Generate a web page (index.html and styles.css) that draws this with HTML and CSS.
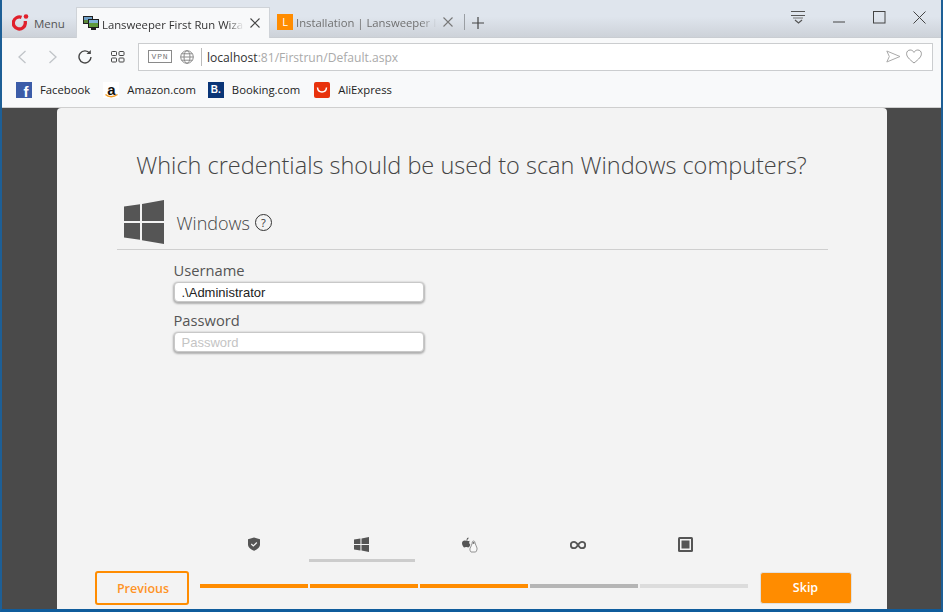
FILE: index.html
```html
<!DOCTYPE html>
<html lang="en">
<head>
<meta charset="utf-8">
<title>Lansweeper First Run Wizard</title>
<link rel="stylesheet" href="styles.css">
</head>
<body>
<div class="window">
  <header class="tabbar">
    <div class="menu">
      <svg class="opera" width="17" height="18" viewBox="0 0 17 18"><path d="M9.500 3.400A6 6 0 1 0 13.300 9.500V7" fill="none" stroke="#e0202c" stroke-width="3.300"/><circle cx="14" cy="2.500" r="2.300" fill="#e0202c"/></svg>
      <span>Menu</span>
    </div>
    <div class="tab active">
      <svg class="favicon" width="16" height="15" viewBox="0 0 16 15"><rect x="0" y="0" width="10" height="8" fill="#222"/><rect x="1" y="1" width="8" height="3" fill="#6fa0c8"/><rect x="1" y="4" width="8" height="3" fill="#5c8a3a"/><rect x="5" y="3" width="11" height="9" fill="#1c1c1c"/><rect x="6" y="4" width="9" height="3" fill="#7fb2d8"/><rect x="6" y="7" width="9" height="4" fill="#5f9a3c"/><rect x="8" y="12" width="5" height="2" fill="#222"/></svg>
      <span class="tab-title">Lansweeper First Run Wiza</span>
      <svg class="tab-x" width="10" height="10" viewBox="0 0 10 10"><path d="M.5.500l9 9M9.500.500l-9 9" stroke="#444" stroke-width="1.100" fill="none"/></svg>
    </div>
    <div class="tab">
      <span class="lfav">L</span>
      <span class="tab-title dim">Installation | Lansweeper I</span>
      <svg class="tab-x" width="10" height="10" viewBox="0 0 10 10"><path d="M.5.500l9 9M9.500.500l-9 9" stroke="#777" stroke-width="1.100" fill="none"/></svg>
    </div>
    <div class="tab-sep"></div>
    <svg class="plus" width="12" height="12" viewBox="0 0 12 12"><path d="M6 0v12M0 6h12" stroke="#444" stroke-width="1.200" fill="none"/></svg>
    <div class="win-ctrls">
      <svg class="wc-easy" width="15" height="13" viewBox="0 0 15 13"><path d="M0 .5h14M0 4.500h14" stroke="#555" fill="none"/><path d="M4 9l3.500 3L11 9" stroke="#555" stroke-width="1.200" fill="none"/><path d="M2 7h10" stroke="#777" fill="none"/></svg>
      <svg class="wc-min" width="12" height="2" viewBox="0 0 12 2"><path d="M0 1h12" stroke="#444" fill="none"/></svg>
      <svg class="wc-max" width="13" height="13" viewBox="0 0 13 13"><rect x=".5" y=".5" width="11.500" height="11.500" stroke="#444" fill="none"/></svg>
      <svg class="wc-close" width="13" height="13" viewBox="0 0 13 13"><path d="M.5.500l12 12M12.500.500l-12 12" stroke="#444" fill="none"/></svg>
    </div>
  </header>

  <nav class="toolbar">
    <svg class="nav-ic" width="10" height="14" viewBox="0 0 10 14"><path d="M8.500 1L2 7l6.500 6" stroke="#c0c4c8" stroke-width="1.300" fill="none"/></svg>
    <svg class="nav-ic" width="10" height="14" viewBox="0 0 10 14"><path d="M1.500 1L8 7l-6.500 6" stroke="#c0c4c8" stroke-width="1.300" fill="none"/></svg>
    <svg class="nav-ic" width="14" height="14" viewBox="0 0 14 14"><path d="M11.800 3.300A6 6 0 1 0 13 7" stroke="#444" stroke-width="1.400" fill="none"/><path d="M8.500 3.900h4.300V0z" fill="#444"/></svg>
    <svg class="nav-ic" width="14" height="12" viewBox="0 0 14 12"><g stroke="#444" fill="none"><rect x=".5" y=".5" width="5" height="4" rx=".8"/><rect x="8" y=".5" width="5" height="4" rx=".8"/><rect x=".5" y="7" width="5" height="4" rx=".8"/><rect x="8" y="7" width="5" height="4" rx=".8"/></g></svg>
    <div class="address">
      <span class="vpn">VPN</span>
      <svg class="globe" width="14" height="14" viewBox="0 0 14 14"><g stroke="#8a8a8a" fill="none"><circle cx="7" cy="7" r="6.300"/><ellipse cx="7" cy="7" rx="3" ry="6.300"/><path d="M.7 7h12.600M1.500 3.800h11M1.500 10.200h11"/></g></svg>
      <span class="addr-sep"></span>
      <span class="url"><b>localhost</b>:81/Firstrun/Default.aspx</span>
      <svg class="send" width="15" height="13" viewBox="0 0 15 13"><path d="M.8 1L14 6.500.8 12l2.500-5.500z" stroke="#aaa" fill="none"/></svg>
      <svg class="heart" width="16" height="15" viewBox="0 0 16 15"><path d="M8 14C3 10 .6 7.600.6 4.700.6 2.500 2.200 1 4.200 1 5.800 1 7.200 1.900 8 3.400 8.800 1.900 10.200 1 11.800 1c2 0 3.600 1.500 3.600 3.700C15.400 7.600 13 10 8 14z" stroke="#999" fill="none"/></svg>
    </div>
  </nav>

  <nav class="bookmarks">
    <a class="bm"><span class="bm-ic fb">f</span>Facebook</a>
    <a class="bm bm-amz"><span class="bm-ic amz"><span class="amz-a">a</span><svg class="amz-smile" width="13" height="4" viewBox="0 0 13 4"><path d="M.5.500c3 3 8 3 12 0" stroke="#f29a1f" stroke-width="1.300" fill="none"/></svg></span>Amazon.com</a>
    <a class="bm bm-bk"><span class="bm-ic bk">B.</span>Booking.com</a>
    <a class="bm"><span class="bm-ic ali"><svg width="12" height="6" viewBox="0 0 12 6"><path d="M1.500 .5c.5 6 8.500 6 9 0" stroke="#fff" stroke-width="1.500" fill="none"/></svg></span>AliExpress</a>
  </nav>

  <main class="page">
    <section class="card">
      <h1 class="title">Which credentials should be used to scan Windows computers?</h1>
      <div class="os-head">
        <svg class="win-big" width="40" height="44" viewBox="0 0 40 44"><path d="M0 6.500l16-2.200V21H0zM18 4l22-4v21H18zM0 23h16v16.700L0 37.500zM18 23h22v21l-22-3.800z" fill="#555"/></svg>
        <span class="os-name">Windows</span>
        <span class="help">?</span>
      </div>
      <form class="form">
        <label class="lbl">Username</label>
        <input class="inp" type="text" value=".\Administrator">
        <label class="lbl">Password</label>
        <input class="inp" type="text" placeholder="Password">
      </form>
      <div class="spacer"></div>
      <div class="steps">
        <div class="step">
          <svg width="14" height="14" viewBox="0 0 14 14"><path d="M7 .5l6 1.800v5C13 10.500 10 12.800 7 13.800 4 12.800 1 10.500 1 7.300v-5z" fill="#555"/><path d="M4.300 7l2 2 3.500-3.500" stroke="#f3f3f3" stroke-width="1.200" fill="none"/></svg>
        </div>
        <div class="step current">
          <svg width="15" height="15" viewBox="0 0 14 14"><path d="M0 2.300l6-.9V6.500H0zM7 1.300L14 0v6.500H7zM0 7.500h6v5.100l-6-.9zM7 7.500h7V14l-7-1.300z" fill="#555"/></svg>
        </div>
        <div class="step">
          <svg width="16" height="16" viewBox="0 0 16 16"><path d="M4.500 3.500c1 0 1.300.5 2 .5.400 0 .8-.2 1.300-.3-.9 1-.9 3 .5 4-.5 1.500-1.300 2.800-2.300 2.800-.8 0-1-.4-1.800-.4s-1 .4-1.700.4C1.500 10.500 0 8 0 6.200 0 4.500 1.300 3.500 2.500 3.500c.8 0 1.400.3 2 0zM4.500 3c0-1.200.9-2.300 2-2.500C6.700 1.800 5.700 3 4.500 3z" fill="#555"/><path d="M11.500 4c1.200 0 1.500 1 1.500 2 .2 1.300 1.500 3 2 5 .2 1.200-.3 3-1.300 4H9c-1-.8-1.300-2.700-.9-3.800.7-1.700 1.900-3.300 2.100-5 0-1.200.3-2.200 1.300-2.200z" fill="#f8f8f8" stroke="#777" stroke-width=".8"/><path d="M10.800 5.200h1.500v1.500h-1.500z" fill="#555"/></svg>
        </div>
        <div class="step step-inf">
          <svg width="16" height="10" viewBox="0 0 16 10"><path d="M8 5C6.800 2.900 5.600 1.800 4 1.800a3.200 3.200 0 0 0 0 6.400C5.600 8.200 6.800 7.100 8 5c1.200-2.100 2.400-3.200 4-3.200a3.200 3.200 0 0 1 0 6.400C10.400 8.200 9.200 7.100 8 5z" stroke="#555" stroke-width="1.800" fill="none"/></svg>
        </div>
        <div class="step">
          <svg width="15" height="15" viewBox="0 0 15 15"><rect x="0" y="0" width="15" height="15" rx="1.500" fill="#555"/><rect x="2" y="2" width="11" height="11" fill="#f3f3f3"/><rect x="3.500" y="3.500" width="8" height="8" fill="#555"/></svg>
        </div>
      </div>
      <div class="footer">
        <button class="btn prev" type="button">Previous</button>
        <div class="progress">
          <span class="seg done"></span><span class="seg done"></span><span class="seg done"></span><span class="seg mid"></span><span class="seg light"></span>
        </div>
        <button class="btn skip" type="button">Skip</button>
      </div>
    </section>
  </main>
</div>
</body>
</html>
```
FILE: styles.css
```css
* { box-sizing: border-box; }
html, body { margin: 0; padding: 0; }
body { width: 943px; height: 612px; overflow: hidden; font-family: "Open Sans", "Noto Sans", sans-serif; }
.window { width: 943px; height: 612px; display: flex; flex-direction: column; border-left: 2px solid #1d5f96; border-right: 2px solid #1d5f96; border-bottom: 3px solid #0f5c9c; }

.tabbar { height: 38px; flex: none; display: flex; align-items: flex-end; background: linear-gradient(#dfe5ed 0, #dfe5ed 45%, #cdd2d9 100%); border-bottom: 1px solid #c9cdd2; }
.menu { width: 74px; height: 30px; display: flex; align-items: center; padding-left: 10px; gap: 5px; font-size: 11.5px; color: #555; }
.menu span { margin-top: 2px; }
.opera { margin-top: 1px; }
.tab { height: 31px; display: flex; align-items: center; font-size: 11.3px; white-space: nowrap; }
.tab.active { width: 194px; background: #f8f9fa; border: 1px solid #cfd3d8; border-bottom: 0; padding: 0 3px 0 6px; margin-bottom: -1px; color: #333; }
.tab:not(.active) { width: 194px; padding: 0 11px 0 7px; color: #666; }
.tab-title { flex: 1; padding-top: 2px; -webkit-mask-image: linear-gradient(to right, #000 88%, transparent); mask-image: linear-gradient(to right, #000 88%, transparent); }
.favicon { flex: none; margin-right: 3px; }
.tab-title.dim { color: #707070; }
.tab-x { flex: none; margin-left: 6px; }
.active .tab-x { margin-right: 6px; }
.lfav { flex: none; width: 16px; height: 16px; background: #ff8c00; color: #fff; font-size: 11px; text-align: center; line-height: 16px; margin-right: 3px; }
.tab-sep { width: 1px; height: 16px; background: #9a9ea3; margin: 0 0 7px 0; }
.plus { margin: 0 0 8px 7px; }
.win-ctrls { margin-left: auto; align-self: stretch; width: 160px; display: flex; align-items: flex-start; }
.win-ctrls svg { flex: none; }
.wc-easy { margin: 11px 0 0 10px; }
.wc-min { margin: 21px 0 0 27px; }
.wc-max { margin: 11px 0 0 28px; }
.wc-close { margin: 11px 0 0 27px; }

.toolbar { height: 37px; flex: none; display: flex; align-items: center; background: #f8f9fa; padding-left: 15px; }
.nav-ic:nth-child(2) { margin-left: 21px; }
.nav-ic:nth-child(3) { margin-left: 20px; }
.nav-ic:nth-child(4) { margin-left: 19px; }
.address { width: 795px; height: 28px; margin-left: 13px; background: #fff; border: 1px solid #cbcdcf; display: flex; align-items: center; padding: 0 10px 0 9px; font-size: 12.1px; }
.vpn { width: 24px; height: 13px; border: 1px solid #8a8a8a; font-size: 8px; line-height: 11px; letter-spacing: .8px; text-align: center; color: #777; flex: none; font-family: "Liberation Mono", monospace; }
.globe { margin-left: 8px; flex: none; }
.addr-sep { width: 1px; height: 18px; background: #bbb; margin: 0 5px 0 7px; flex: none; }
.url { flex: 1; color: #aaa; padding-top: 2px; }
.url b { font-weight: 400; color: #333; }
.send { flex: none; margin-right: 5px; }
.heart { flex: none; }

.bookmarks { height: 33px; flex: none; display: flex; align-items: center; background: #f8f9fa; border-bottom: 1px solid #cfcfcf; padding: 0 0 3px 14px; font-size: 11.3px; color: #222; }
.bm { display: flex; align-items: center; margin-right: 13px; }
.bm-amz { margin-right: 12px; }
.bm-bk { margin-right: 14px; }
.bm-ic { width: 16px; height: 16px; flex: none; margin-right: 8px; display: flex; align-items: center; justify-content: center; font-family: "Liberation Sans", sans-serif; font-weight: 700; color: #fff; }
.fb { background: #3b5ca8; font-size: 15px; line-height: 13px; padding-top: 3px; padding-left: 4px; }
.amz { flex-direction: column; color: #111; background: #fff; }
.amz-a { font-size: 15px; line-height: 15px; }
.amz-smile { margin-top: -3px; flex: none; }
.bk { background: #0a3577; font-size: 10px; }
.ali { background: #e8320c; border-radius: 2px; }

.page { flex: 1; min-height: 0; background: #4a4a4a; display: flex; justify-content: center; }
.card { width: 830px; background: #f3f3f3; border-radius: 4px 4px 0 0; display: flex; flex-direction: column; }
.title { margin: 42px 0 0; font-size: 23.5px; line-height: 30px; font-weight: 300; color: #444; text-align: center; }
.os-head { margin: 20px 59px 0 60px; height: 50px; border-bottom: 1px solid #cfcfcf; display: flex; align-items: flex-start; }
.win-big { margin: 0 0 0 7px; flex: none; }
.os-name { margin: 11px 0 0 13px; font-size: 18px; line-height: 24px; font-weight: 300; color: #444; }
.help { margin: 14px 0 0 5px; width: 17px; height: 17px; border: 1px solid #333; border-radius: 50%; font-size: 11px; line-height: 15px; text-align: center; color: #333; }
.form { margin: 11px 0 0 117px; width: 251px; display: flex; flex-direction: column; }
.lbl { font-size: 14.7px; line-height: 19px; color: #555; }
.inp { width: 250px; height: 20px; border: 1px solid #c8c8c8; border-radius: 4px; background: #fff; box-shadow: 0 1px 2px 1px rgba(0,0,0,.28); padding: 0 7px; font: 13px "Liberation Sans", Arial, sans-serif; color: #222; margin: 2px 0 9px; }
.inp::placeholder { color: #c4c4c4; opacity: 1; }
.spacer { flex: 1; }
.steps { display: flex; margin-left: 143px; height: 34px; align-items: flex-start; }
.step { width: 108px; height: 22px; display: flex; justify-content: center; align-items: flex-start; }
.step.current { box-shadow: 0 3px 0 #cccccc; width: 106px; margin: 0 1px; }
.step-inf { padding-top: 3px; }
.footer { display: flex; align-items: center; padding: 0 35px 0 38px; height: 34px; margin-bottom: 4px; }
.btn { font: 600 12.5px "Open Sans", sans-serif; border-radius: 3px; height: 34px; }
.prev { width: 94px; background: #f3f3f3; border: 2px solid #ff8c00; color: #ff9326; padding: 0 0 0 3px; }
.skip { width: 92px; height: 32px; background: #ff8c00; border: 1px solid #e0e0e0; color: #fff; margin-left: 12px; padding: 0 0 2px; }
.progress { display: flex; gap: 2px; margin-left: 11px; margin-top: -5px; }
.seg { width: 108px; height: 4px; }
.done { background: #ff8c00; }
.mid { background: #b5b5b5; }
.light { background: #dcdcdc; }
```
